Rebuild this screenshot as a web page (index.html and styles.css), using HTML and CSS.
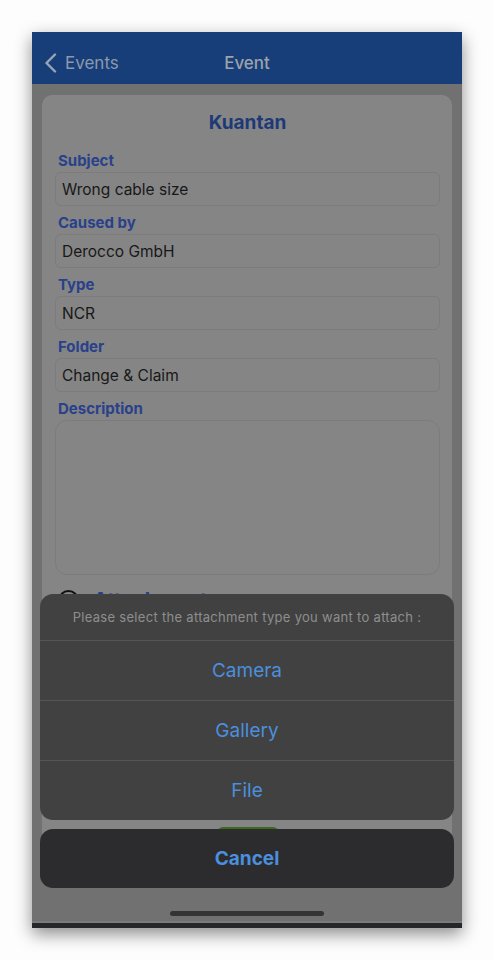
FILE: index.html
```html
<!DOCTYPE html>
<html lang="en">
<head>
  <meta charset="UTF-8">
  <meta name="viewport" content="width=device-width, initial-scale=1.0">
  <title>Event</title>
  <link rel="stylesheet" href="styles.css">
</head>
<body>
  <div class="phone">
    <div class="navbar">
      <div class="nav-back">
        <svg width="13" height="20" viewBox="0 0 13 20"><path d="M11 1.5 L2.5 10 L11 18.5" fill="none" stroke="#9aa4b7" stroke-width="2.4" stroke-linecap="round" stroke-linejoin="round"/></svg>
        <span>Events</span>
      </div>
      <div class="nav-title">Event</div>
    </div>

    <div class="content">
      <div class="card">
        <h1>Kuantan</h1>
        <div class="field">
          <label>Subject</label>
          <div class="input">Wrong cable size</div>
        </div>
        <div class="field">
          <label>Caused by</label>
          <div class="input">Derocco GmbH</div>
        </div>
        <div class="field">
          <label>Type</label>
          <div class="input">NCR</div>
        </div>
        <div class="field">
          <label>Folder</label>
          <div class="input">Change &amp; Claim</div>
        </div>
        <div class="field">
          <label>Description</label>
          <div class="textarea"></div>
        </div>
        <div class="attach-row">
          <span class="attach-circle"></span>
          <span class="attach-title">Attachments</span>
        </div>
        <div class="attach-list"></div>
        <div class="save-wrap"><button class="save-btn"></button></div>
      </div>
    </div>

    <div class="bottom-strip"></div>
    <div class="home-indicator"></div>

    <div class="sheet-wrap">
      <div class="sheet">
        <div class="sheet-header">Please select the attachment type you want to attach :</div>
        <div class="sheet-item">Camera</div>
        <div class="sheet-item">Gallery</div>
        <div class="sheet-item">File</div>
      </div>
      <div class="sheet-cancel">Cancel</div>
    </div>
  </div>
</body>
</html>
```

FILE: styles.css
```css
body {
  margin: 0;
  padding: 32px;
  background: #fdfdfd;
  font-family: Inter, 'Liberation Sans', sans-serif;
}
.phone {
  position: relative;
  width: 430px;
  height: 896px;
  background: #717171;
  display: flex;
  flex-direction: column;
  overflow: hidden;
  box-shadow: 0 6px 16px rgba(0, 0, 0, 0.45);
}
.navbar {
  height: 52px;
  box-sizing: border-box;
  padding-top: 9px;
  flex: none;
  background: #173e78;
  display: flex;
  align-items: center;
  position: relative;
}
.nav-back {
  display: flex;
  align-items: center;
  gap: 8px;
  padding-left: 12px;
  color: #8c98ae;
  font-size: 17px;
}
.nav-title {
  position: absolute;
  left: 0;
  right: 0;
  text-align: center;
  color: #9ca2ab;
  font-size: 17px;
  font-weight: 500;
  pointer-events: none;
}
.content {
  flex: 1;
  padding: 11px 10px 0;
  overflow: hidden;
}
.card {
  background: #858585;
  border-radius: 10px;
  padding: 15px 12px 12px 13px;
}
.card h1 {
  margin: 0 0 15px;
  text-align: center;
  font-size: 19px;
  line-height: 26px;
  font-weight: 700;
  color: #1e3977;
}
.field {
  display: flex;
  flex-direction: column;
  gap: 1px;
  margin-bottom: 7px;
}
.field label {
  padding-left: 3px;
  font-size: 15px;
  line-height: 20px;
  font-weight: 700;
  color: #29418b;
}
.input {
  height: 34px;
  box-sizing: border-box;
  border: 1px solid #7c7c7c;
  border-radius: 6px;
  padding: 0 6px;
  display: flex;
  align-items: center;
  font-size: 15.5px;
  color: #181818;
}
.textarea {
  height: 155px;
  box-sizing: border-box;
  border: 1px solid #7c7c7c;
  border-radius: 12px;
}
.attach-row {
  display: flex;
  align-items: center;
  gap: 14px;
  padding: 6px 0 0 3px;
}
.attach-circle {
  width: 17px;
  height: 17px;
  border: 2px solid #111;
  border-radius: 50%;
}
.attach-title {
  font-size: 20px;
  font-weight: 700;
  color: #233f8f;
}
.attach-list {
  height: 215px;
}
.save-wrap {
  display: flex;
  justify-content: center;
}
.save-btn {
  width: 62px;
  height: 34px;
  border: none;
  border-radius: 6px;
  background: #3b6a1b;
}
.bottom-strip {
  height: 5px;
  flex: none;
  background: #24282b;
  border-top: 2px solid #7c7c7c;
}
.home-indicator {
  position: absolute;
  left: 138px;
  bottom: 12px;
  width: 154px;
  height: 5px;
  border-radius: 3px;
  background: #343434;
}
.sheet-wrap {
  position: absolute;
  left: 8px;
  right: 8px;
  bottom: 40px;
  display: flex;
  flex-direction: column;
  gap: 9px;
}
.sheet {
  background: #414141;
  border-radius: 13px;
  overflow: hidden;
}
.sheet-header {
  height: 46px;
  display: flex;
  align-items: center;
  justify-content: center;
  font-size: 13px;
  letter-spacing: 0.3px;
  color: #8e8e8e;
}
.sheet-item {
  height: 59px;
  border-top: 1px solid #555;
  display: flex;
  align-items: center;
  justify-content: center;
  font-size: 19px;
  color: #4b8fde;
}
.sheet-cancel {
  height: 59px;
  background: #2c2c2e;
  border-radius: 13px;
  display: flex;
  align-items: center;
  justify-content: center;
  font-size: 19px;
  font-weight: 700;
  color: #4b8fde;
}
```
